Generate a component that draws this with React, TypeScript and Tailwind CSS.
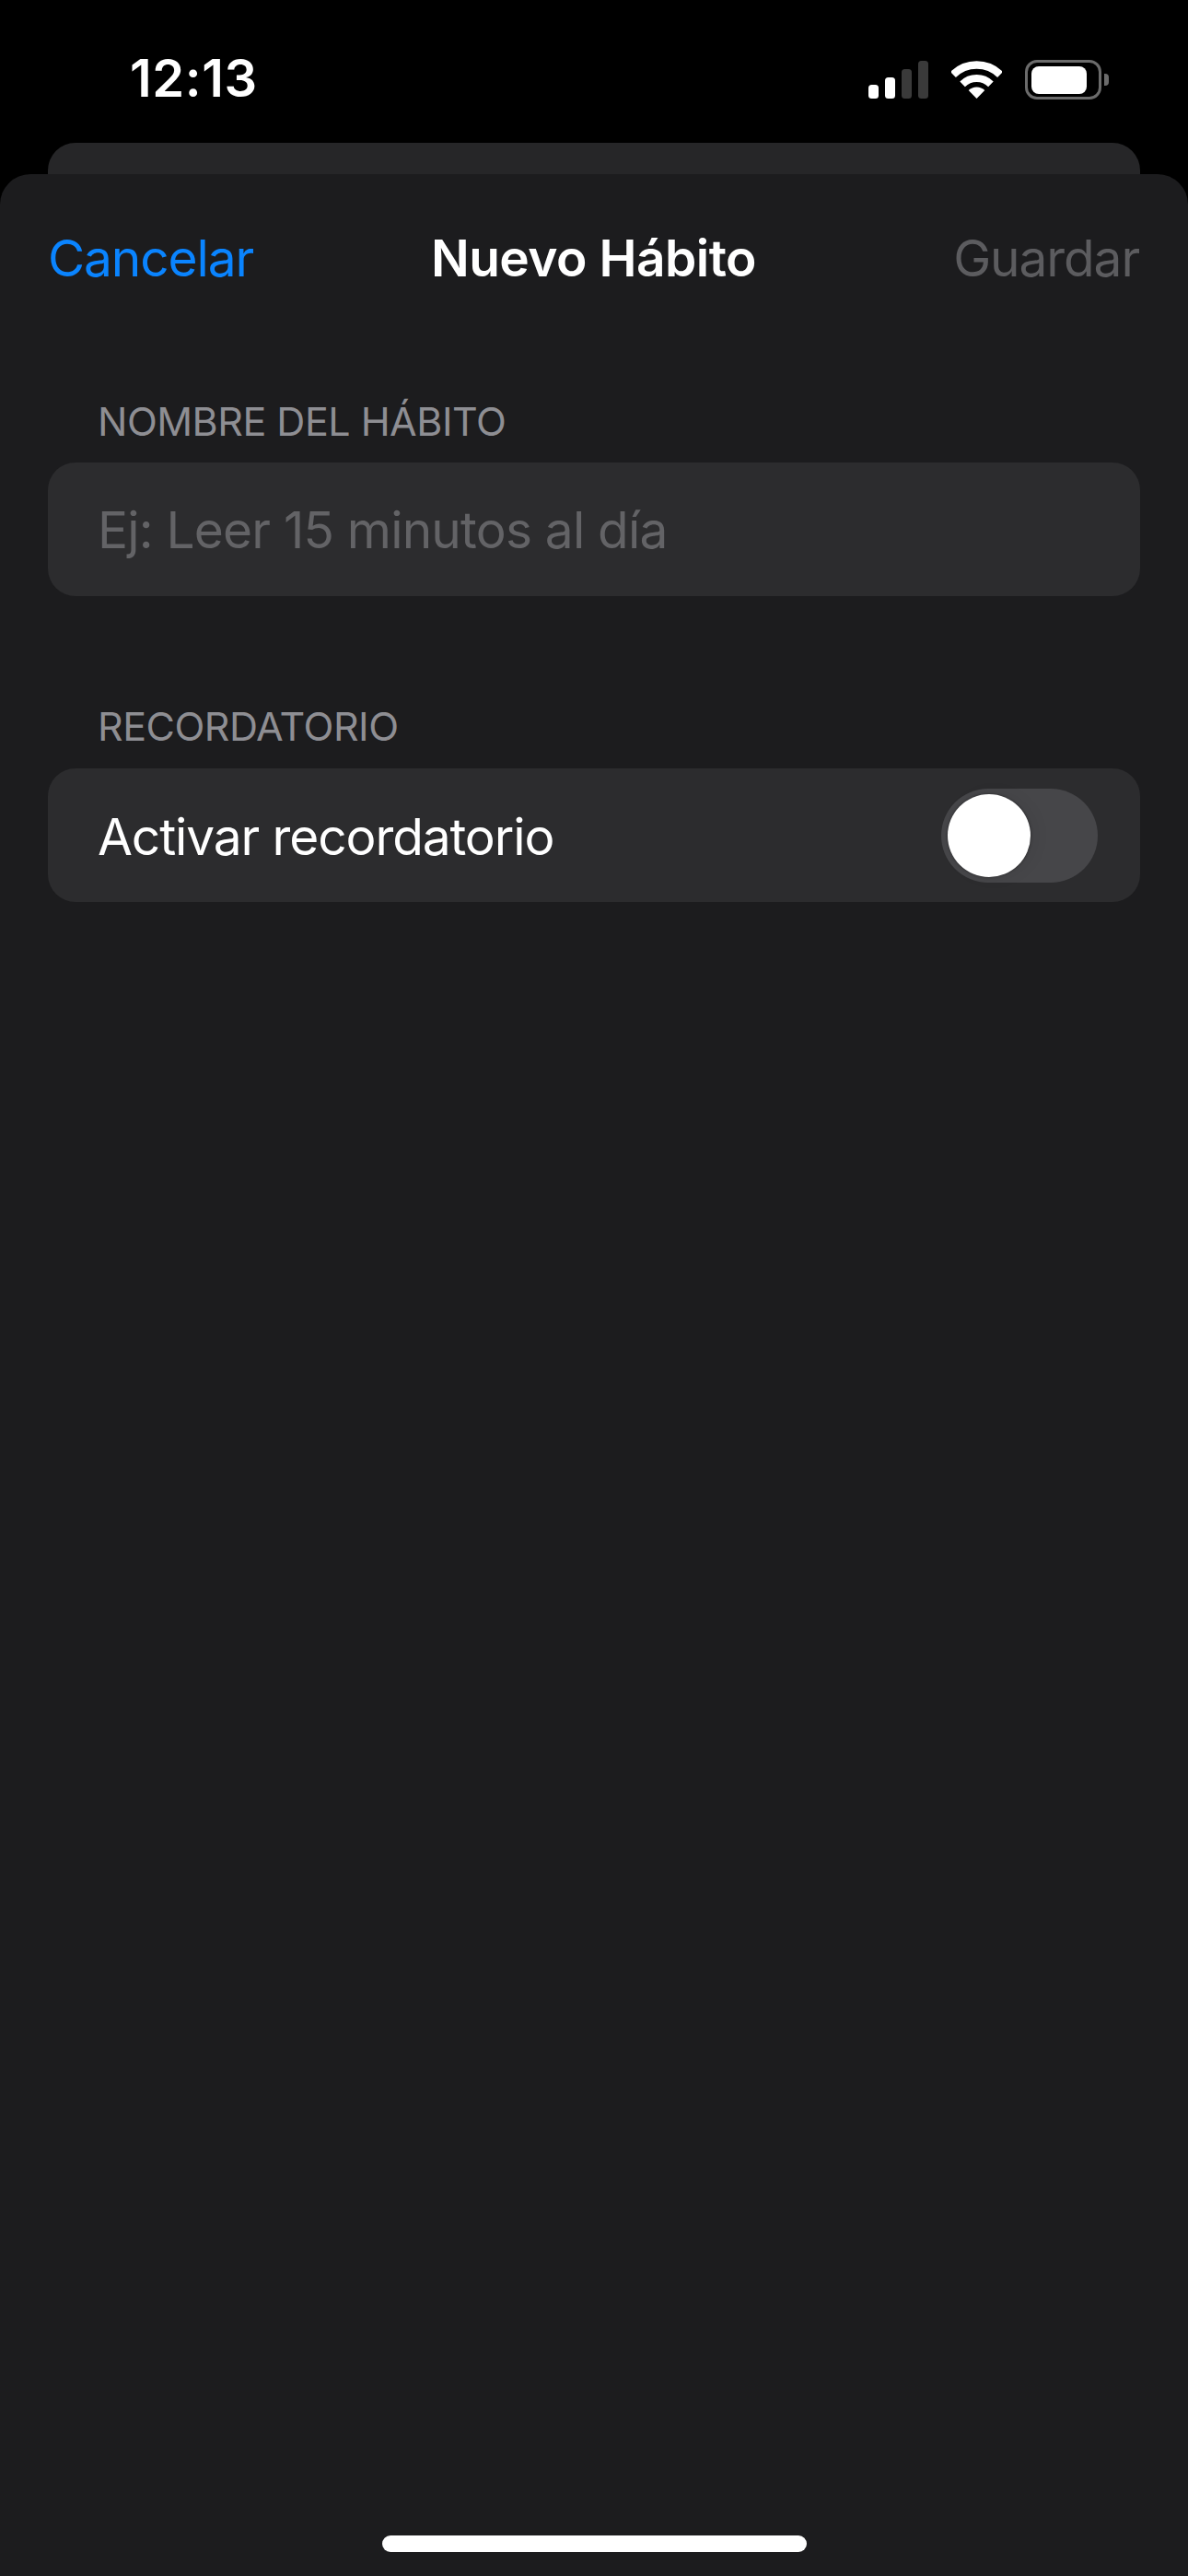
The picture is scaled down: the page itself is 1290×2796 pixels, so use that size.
const SF = "font-['Inter','Liberation_Sans',sans-serif]";

function SignalIcon() {
  return (
    <div className="flex items-end gap-[7px]">
      <div className="h-[15px] w-[11px] rounded-[3.5px] bg-white" />
      <div className="h-[23px] w-[11px] rounded-[3.5px] bg-white" />
      <div className="h-[32px] w-[11px] rounded-[3.5px] bg-[#3a3a3a]" />
      <div className="h-[41px] w-[11px] rounded-[3.5px] bg-[#3a3a3a]" />
    </div>
  );
}

function WifiIcon() {
  return (
    <svg width="55" height="41" viewBox="0 0 55 41" fill="none">
      <path d="M1.9 15A36.5 36.5 0 0 1 53.1 15" stroke="#fff" strokeWidth="8.5" />
      <path d="M12.1 25.3A22 22 0 0 1 42.9 25.3" stroke="#fff" strokeWidth="8" />
      <path d="M27.5 41L18.7 32.1A12.5 12.5 0 0 1 36.3 32.1Z" fill="#fff" />
    </svg>
  );
}

function BatteryIcon() {
  return (
    <div className="flex items-center gap-[3px]">
      <div className="flex h-[43px] w-[83px] items-center rounded-[13px] border-[3px] border-[#6b6b6b] pl-[4px]">
        <div className="h-[30px] w-[60px] rounded-[8px] bg-white" />
      </div>
      <div className="h-[13px] w-[5px] rounded-r-[4px] bg-[#6b6b6b]" />
    </div>
  );
}

function Toggle() {
  return (
    <div className="flex h-[102px] w-[170px] items-center rounded-full bg-[#464649] pl-[7px]">
      <div className="h-[90px] w-[90px] rounded-full bg-white shadow-[0_0_3px_rgba(0,0,0,0.45),5px_0_18px_rgba(0,0,0,0.06)]" />
    </div>
  );
}

function SectionLabel({ children }: { children: string }) {
  return (
    <div className="h-[57px] pl-[54px] text-[43px] leading-[57px] tracking-[-0.5px] text-[#8e8e93]">
      {children}
    </div>
  );
}

export default function App() {
  return (
    <div className={`flex h-[2796px] w-[1290px] flex-col bg-black ${SF}`}>
      {/* status bar */}
      <div className="flex h-[155px] shrink-0 items-start justify-between pl-[141px] pr-[86px] pt-[65px]">
        <span className="text-[56px] leading-[41px] font-semibold tracking-[0.6px] text-white">
          12:13
        </span>
        <div className="flex items-center gap-[25px]">
          <SignalIcon />
          <WifiIcon />
          <BatteryIcon />
        </div>
      </div>

      {/* card behind the sheet */}
      <div className="mx-[52px] h-[34px] shrink-0 rounded-t-[30px] bg-[#262628]" />

      <div className="flex flex-1 flex-col rounded-t-[33px] bg-[#1c1c1e] pt-[60px]">
        <div className="flex h-[62px] items-center justify-between pl-[52px] pr-[53px] text-[55px]">
          <span className="flex-1 tracking-[-1.1px] text-[#0a84ff]">Cancelar</span>
          <span className="font-semibold tracking-[-0.5px] text-white">Nuevo Hábito</span>
          <span className="flex-1 text-right tracking-[-1.1px] text-[#5c5c5f]">Guardar</span>
        </div>

        <div className="mt-[118px] px-[52px]">
          <SectionLabel>NOMBRE DEL HÁBITO</SectionLabel>
          <div className="mt-[16px] flex h-[145px] items-center rounded-[30px] bg-[#2c2c2e] pl-[54px] text-[55px] tracking-[-0.8px] text-[#636366]">
            <span className="mt-[2px]">Ej: Leer 15 minutos al día</span>
          </div>
        </div>

        <div className="mt-[113px] px-[52px]">
          <SectionLabel>RECORDATORIO</SectionLabel>
          <div className="mt-[17px] flex h-[145px] items-center justify-between rounded-[30px] bg-[#2c2c2e] pl-[54px] pr-[46px] text-[55px] tracking-[-1.1px] text-white">
            <span className="mt-[3px]">Activar recordatorio</span>
            <Toggle />
          </div>
        </div>

        {/* home indicator */}
        <div className="mt-auto mb-[26px] h-[18px] w-[461px] self-center rounded-full bg-white" />
      </div>
    </div>
  );
}
